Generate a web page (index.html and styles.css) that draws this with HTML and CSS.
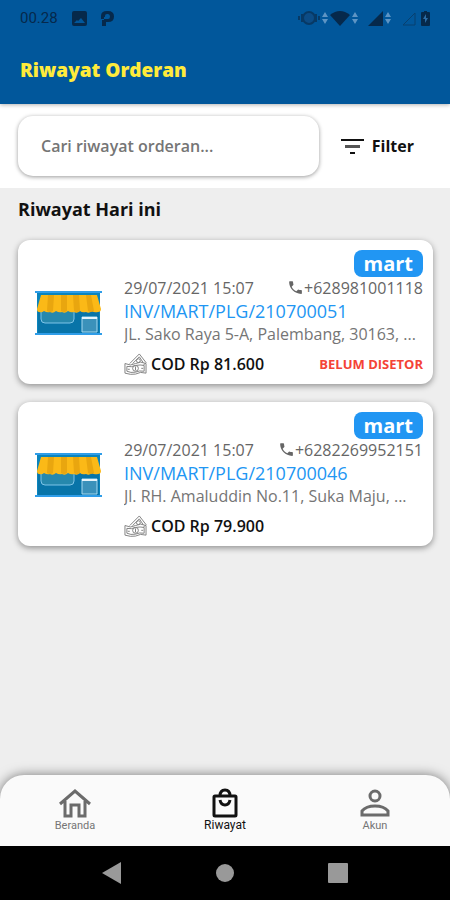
FILE: index.html
```html
<!DOCTYPE html>
<html lang="id">
<head>
    <meta charset="utf-8">
    <meta name="viewport" content="width=device-width, initial-scale=1">
    <title>Riwayat Orderan</title>
    <link rel="stylesheet" href="styles.css">
</head>
<body>

    <!-- shared drawings for the order cards -->
    <svg class="defs" aria-hidden="true">
        <symbol id="store" viewBox="0 0 67 44">
            <path fill="#0a84bd" d="M2 1h63v42H2z"/>
            <path fill="#0874a8" d="M3 20h61v22H3z"/>
            <path fill="#2f9de8" d="M0 0h67v2H0zM0 42h67v2H0z"/>
            <path fill="#2688ad" stroke="#7cc4e8" d="M6 17v11q0 4 4 4h25q4 0 4-4V17z"/>
            <path fill="#3b91ba" stroke="#a5d8f0" d="M47 26h15v15H47z"/>
            <path stroke="#e6f3fa" stroke-width="2" d="M47 27h15"/>
            <path fill="#fbb917" d="M6 4h56l4 14q0 3-3 3-4 1-6-1-3 3-6 1-4 1-6-1-3 3-6 1-3 1-6-1-3 3-6 1-3 1-6-1-3 3-6 1-3 1-6-1-2 2-5 1-2 0-2-3z"/>
            <path fill="#e9a60f" d="M13 4h6l-1 16q-3 2-6 0zM26 4h6v16q-3 2-6 0zM38 4h6l1 16q-3 2-6 0zM51 4h5l3 16q-3 2-6 0z"/>
        </symbol>
        <symbol id="phone" viewBox="0 0 24 24">
            <path d="M6.6 10.8c1.4 2.8 3.800 5.200 6.600 6.600l2.200-2.200c.3-.3.7-.4 1-.2 1.100.4 2.300.6 3.600.6.6 0 1 .4 1 1V20c0 .6-.4 1-1 1C10.600 21 3 13.400 3 4c0-.6.4-1 1-1h3.500c.6 0 1 .4 1 1 0 1.300.2 2.500.6 3.600.1.3 0 .7-.2 1z"/>
        </symbol>
        <symbol id="cash" viewBox="0 0 24 24">
            <g fill="none" stroke="#808080" stroke-width="1">
                <path d="M6 11 16 1l7 9-3 3"/>
                <path d="m9 11 7-7 4 6"/>
                <circle cx="15" cy="8" r="2"/>
                <path d="M1 11q6 3 11 0t11 0v10q-6-2-11 1-5 1-11-1z"/>
                <path d="M3 14q5 1 9-1 5-1 9 0v6q-5-1-9 1-5 1-9-1z"/>
                <circle cx="12" cy="16" r="3"/>
                <path d="M12 14v4M4 17h2M18 16h2"/>
            </g>
        </symbol>
        <symbol id="updown" viewBox="0 0 6 14">
            <path fill="#5d94c4" d="M0 6l3-5 3 5zM0 8h6l-3 5z"/>
        </symbol>
    </svg>

    <header class="app-header">
        <div class="status-bar">
            <span class="clock">00.28</span>
            <svg class="notif" width="15" height="15" viewBox="0 0 15 15"><path fill="#06294b" fill-rule="evenodd" d="M2 0h11q2 0 2 2v11q0 2-2 2H2q-2 0-2-2V2q0-2 2-2zm0 12h11L9 7l-3 3-1-1z"/></svg>
            <svg class="notif" width="13" height="15" viewBox="0 0 13 15"><path fill="#06294b" fill-rule="evenodd" d="M0 8V5q0-5 6-5h1q6 0 6 5.500T7 11H5v4H1V9h2V6h1v2h3q2 0 2-2.500T7 3H6Q4 3 4 5v3z"/></svg>
            <div class="status-icons">
                <svg width="22" height="16" viewBox="0 0 22 16"><circle cx="11" cy="8" r="6" fill="#0c4c86" stroke="#073965" stroke-width="2"/><path fill="none" stroke="#073965" stroke-width="2" d="M4 4v8M18 4v8M1 6v4M21 6v4"/></svg>
                <svg class="arrows" width="6" height="14"><use href="#updown"/></svg>
                <svg width="20" height="16" viewBox="0 0 20 16"><path fill="#06294b" d="M0 5q10-8 20 0l-10 11z"/></svg>
                <svg class="arrows" width="6" height="14"><use href="#updown"/></svg>
                <svg class="signal" width="15" height="15" viewBox="0 0 15 15"><path fill="#06294b" d="M15 0v15H0z"/></svg>
                <svg class="arrows" width="6" height="14"><use href="#updown"/></svg>
                <svg class="signal" width="15" height="15" viewBox="0 0 15 15"><path fill="none" stroke="#08406f" d="M14 2v12H2z"/></svg>
                <svg class="battery" width="9" height="15" viewBox="0 0 9 15"><path fill="#06294b" d="M3 0h3v1h2q1 0 1 1v12q0 1-1 1H1q-1 0-1-1V2q0-1 1-1h2z"/><path fill="#2c6ca5" d="M5 3 2 8h2v4l3-5H5z"/></svg>
            </div>
        </div>
        <h1>Riwayat Orderan</h1>
    </header>

    <form class="search-bar">
        <input type="text" name="cari" placeholder="Cari riwayat orderan..." aria-label="Cari riwayat orderan">
        <button type="button" class="filter">
            <svg width="23" height="15" viewBox="0 0 23 15"><path fill="#111" d="M0 0h23v2H0zM9 13h5v2H9z"/><path fill="#555" d="M4 6h15v3H4z"/></svg>
            Filter
        </button>
    </form>

    <main>
        <h2>Riwayat Hari ini</h2>

        <article class="card">
            <svg class="store" width="67" height="44"><use href="#store"/></svg>
            <div class="info">
                <span class="badge">mart</span>
                <div class="row meta">
                    <span>29/07/2021 15:07</span>
                    <span class="phone"><svg width="17" height="17"><use href="#phone"/></svg>+628981001118</span>
                </div>
                <a class="invoice" href="#">INV/MART/PLG/210700051</a>
                <p class="address">JL. Sako Raya 5-A, Palembang, 30163, ...</p>
                <div class="row payment">
                    <span class="cod"><svg width="23" height="23"><use href="#cash"/></svg>COD Rp 81.600</span>
                    <span class="unpaid">BELUM DISETOR</span>
                </div>
            </div>
        </article>

        <article class="card">
            <svg class="store" width="67" height="44"><use href="#store"/></svg>
            <div class="info">
                <span class="badge">mart</span>
                <div class="row meta">
                    <span>29/07/2021 15:07</span>
                    <span class="phone"><svg width="17" height="17"><use href="#phone"/></svg>+6282269952151</span>
                </div>
                <a class="invoice" href="#">INV/MART/PLG/210700046</a>
                <p class="address">Jl. RH. Amaluddin No.11, Suka Maju, ...</p>
                <div class="row payment">
                    <span class="cod"><svg width="23" height="23"><use href="#cash"/></svg>COD Rp 79.900</span>
                </div>
            </div>
        </article>
    </main>

    <nav class="tabs">
        <a href="#">
            <svg width="34" height="32" viewBox="0 0 34 32"><path fill="none" stroke="#6b6b6b" stroke-width="3" d="M2 17 17 4l15 13M7 14v15h6V18h8v11h6V14"/></svg>
            Beranda
        </a>
        <a href="#" class="active">
            <svg width="34" height="32" viewBox="0 0 34 32"><g fill="none" stroke="#111" stroke-width="3"><rect x="6" y="9" width="22" height="20" rx="1"/><path d="M12 9q0-6 5-6t5 6M12 13q1 5 5 5t5-5"/></g></svg>
            Riwayat
        </a>
        <a href="#">
            <svg width="34" height="32" viewBox="0 0 34 32"><g fill="none" stroke="#6b6b6b" stroke-width="3"><circle cx="17" cy="9" r="5"/><path d="M4 28v-4q4-5 13-5t13 5v4z"/></g></svg>
            Akun
        </a>
    </nav>

    <div class="system-bar">
        <button type="button" aria-label="Kembali"><svg width="20" height="22" viewBox="0 0 20 22"><path fill="#999" d="M0 11 19 0v22z"/></svg></button>
        <button type="button" aria-label="Layar utama"><svg width="20" height="20" viewBox="0 0 20 20"><circle fill="#999" cx="10" cy="10" r="9"/></svg></button>
        <button type="button" aria-label="Aplikasi terbaru"><svg width="20" height="20" viewBox="0 0 20 20"><rect fill="#999" width="20" height="20" rx="1"/></svg></button>
    </div>

</body>
</html>
```

FILE: styles.css
```css
* {
    box-sizing: border-box;
}

body {
    margin: 0;
    min-height: 100vh;
    display: flex;
    flex-direction: column;
    background-color: #eeeeee;
    font-family: "Open Sans", "Noto Sans", sans-serif;
    color: #111;
}

svg {
    display: block;
    flex-shrink: 0;
}

button {
    border: none;
    background: none;
    padding: 0;
    font-family: inherit;
    cursor: pointer;
}

a {
    text-decoration: none;
}

.defs {
    position: absolute;
    width: 0;
    height: 0;
}

.app-header {
    height: 104px;
    background-color: #01579b;
    box-shadow: 0 1px 4px rgba(0, 0, 0, 0.3);
    z-index: 1;
}

.status-bar {
    display: flex;
    align-items: center;
    height: 36px;
    padding: 0 20px;
}

.clock {
    font-family: Roboto, sans-serif;
    font-size: 15px;
    color: #06294b;
}

.notif {
    margin-left: 14px;
}

.status-icons {
    display: flex;
    align-items: center;
    gap: 2px;
    margin-left: auto;
}

.status-icons .signal {
    margin-left: 8px;
}

.status-icons .battery {
    margin-left: 3px;
}

h1 {
    margin: 0;
    padding: 20px 20px 0;
    font-size: 19px;
    line-height: 28px;
    font-weight: 800;
    color: #ffeb3b;
}

.search-bar {
    display: flex;
    align-items: center;
    gap: 22px;
    padding: 12px 36px 12px 18px;
    background-color: white;
}

.search-bar input {
    flex: 1;
    min-width: 0;
    height: 60px;
    padding: 0 23px;
    border: none;
    border-radius: 15px;
    background-color: white;
    box-shadow: 0 1px 4px rgba(0, 0, 0, 0.4);
    font-family: inherit;
    font-size: 16px;
    font-weight: 600;
}

.search-bar input::placeholder {
    color: #757575;
    opacity: 1;
}

.filter {
    display: flex;
    align-items: center;
    gap: 8px;
    font-size: 16px;
    font-weight: 700;
    color: #111;
}

main {
    flex: 1;
    padding: 8px 17px 20px 18px;
}

h2 {
    margin: 0 0 18px;
    font-size: 18px;
    line-height: 26px;
    font-weight: 700;
}

.card {
    display: flex;
    align-items: center;
    gap: 22px;
    height: 144px;
    margin-bottom: 18px;
    padding: 9px 10px 8px 17px;
    border-radius: 12px;
    background-color: white;
    box-shadow: 0 2px 6px rgba(0, 0, 0, 0.4);
}

.info {
    flex: 1;
    min-width: 0;
    display: flex;
    flex-direction: column;
}

.badge {
    align-self: flex-end;
    padding: 0 10px;
    border-radius: 8px;
    background-color: #2196f3;
    color: white;
    font-size: 20px;
    line-height: 27px;
    font-weight: 700;
}

.row {
    display: flex;
    align-items: center;
    justify-content: space-between;
}

.meta {
    font-size: 16px;
    line-height: 22px;
    color: #666;
}

.phone {
    display: flex;
    align-items: center;
}

.phone svg {
    fill: #666;
}

.invoice {
    font-size: 18px;
    line-height: 24px;
    font-weight: 500;
    color: #2196f3;
}

.address {
    margin: 0;
    overflow: hidden;
    white-space: nowrap;
    text-overflow: ellipsis;
    font-size: 16px;
    line-height: 22px;
    font-weight: 500;
    color: #757575;
}

.payment {
    margin-top: 8px;
}

.cod {
    display: flex;
    align-items: center;
    gap: 4px;
    font-size: 16px;
    line-height: 22px;
    font-weight: 600;
}

.unpaid {
    font-size: 13px;
    font-weight: 700;
    color: #f44336;
}

.tabs {
    display: flex;
    height: 71px;
    border-radius: 24px 24px 0 0;
    background-color: #fafafa;
    box-shadow: 0 0 12px rgba(0, 0, 0, 0.5);
}

.tabs a {
    flex: 1;
    display: flex;
    flex-direction: column;
    align-items: center;
    padding-top: 12px;
    font-family: Roboto, sans-serif;
    font-size: 11px;
    line-height: 13px;
    color: #757575;
}

.tabs .active {
    font-size: 12px;
    color: #111;
}

.system-bar {
    display: flex;
    align-items: center;
    justify-content: center;
    gap: 93px;
    height: 54px;
    background-color: black;
    z-index: 1;
}
```
